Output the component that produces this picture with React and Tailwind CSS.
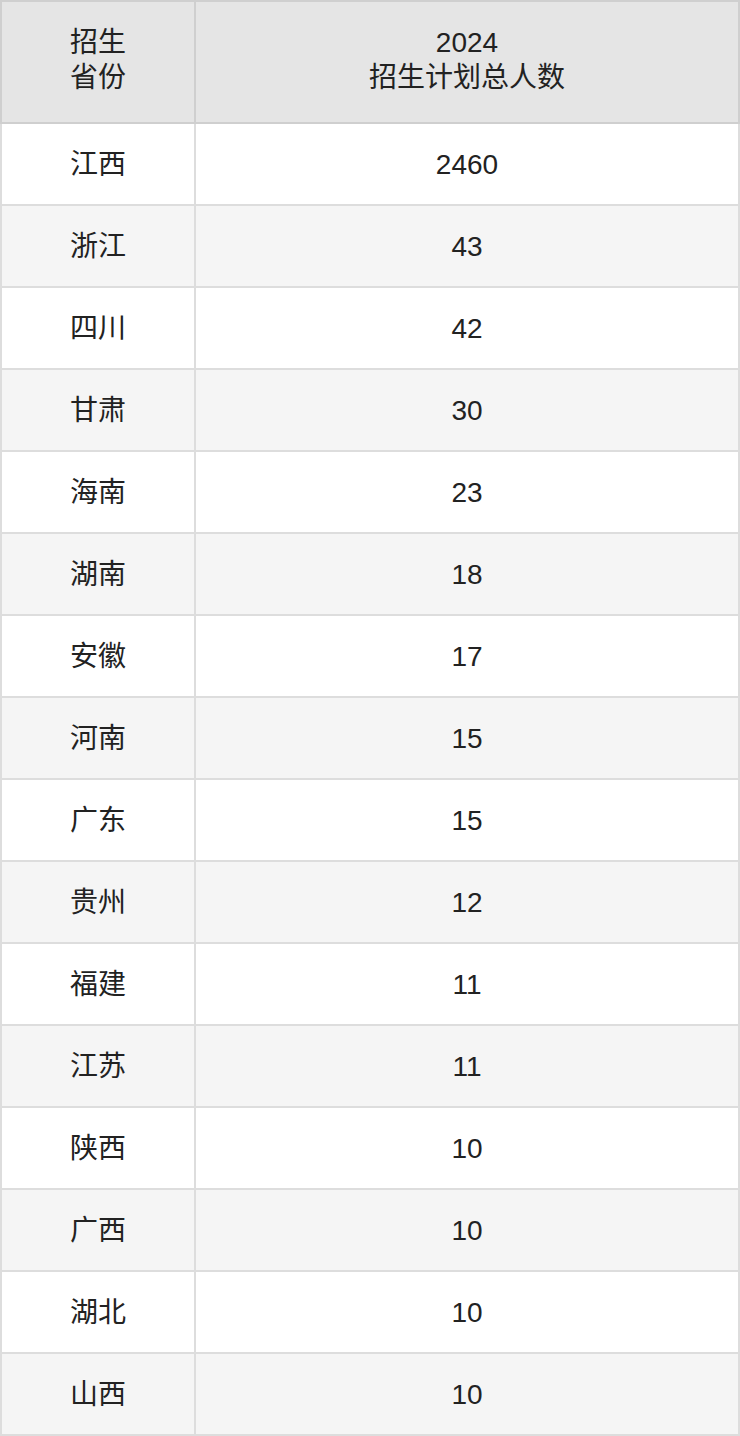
const rows = [
  ["江西", "2460"],
  ["浙江", "43"],
  ["四川", "42"],
  ["甘肃", "30"],
  ["海南", "23"],
  ["湖南", "18"],
  ["安徽", "17"],
  ["河南", "15"],
  ["广东", "15"],
  ["贵州", "12"],
  ["福建", "11"],
  ["江苏", "11"],
  ["陕西", "10"],
  ["广西", "10"],
  ["湖北", "10"],
  ["山西", "10"],
];

export default function App() {
  return (
    <div
      className="w-[740px] bg-white text-[#222] text-[28px] leading-[35px]"
      style={{ fontFamily: '"Liberation Sans", "Noto Sans CJK SC", sans-serif' }}
    >
      <table className="w-[740px] border-collapse table-fixed">
        <colgroup>
          <col className="w-[194px]" />
          <col />
        </colgroup>
        <thead>
          <tr className="bg-[#e5e5e5] h-[122px]">
            <th className="border-2 border-[#cfcfcf] font-normal text-center align-middle pb-[4px]">
              招生
              <br />
              省份
            </th>
            <th className="border-2 border-[#cfcfcf] font-normal text-center align-middle pb-[4px]">
              2024
              <br />
              招生计划总人数
            </th>
          </tr>
        </thead>
        <tbody>
          {rows.map(([p, n], i) => (
            <tr
              key={p + i}
              className={`h-[82px] ${i % 2 === 0 ? "bg-white" : "bg-[#f5f5f5]"}`}
            >
              <td className="border-2 border-[#dddddd] text-center align-middle">
                {p}
              </td>
              <td className="border-2 border-[#dddddd] text-center align-middle">
                {n}
              </td>
            </tr>
          ))}
        </tbody>
      </table>
    </div>
  );
}
